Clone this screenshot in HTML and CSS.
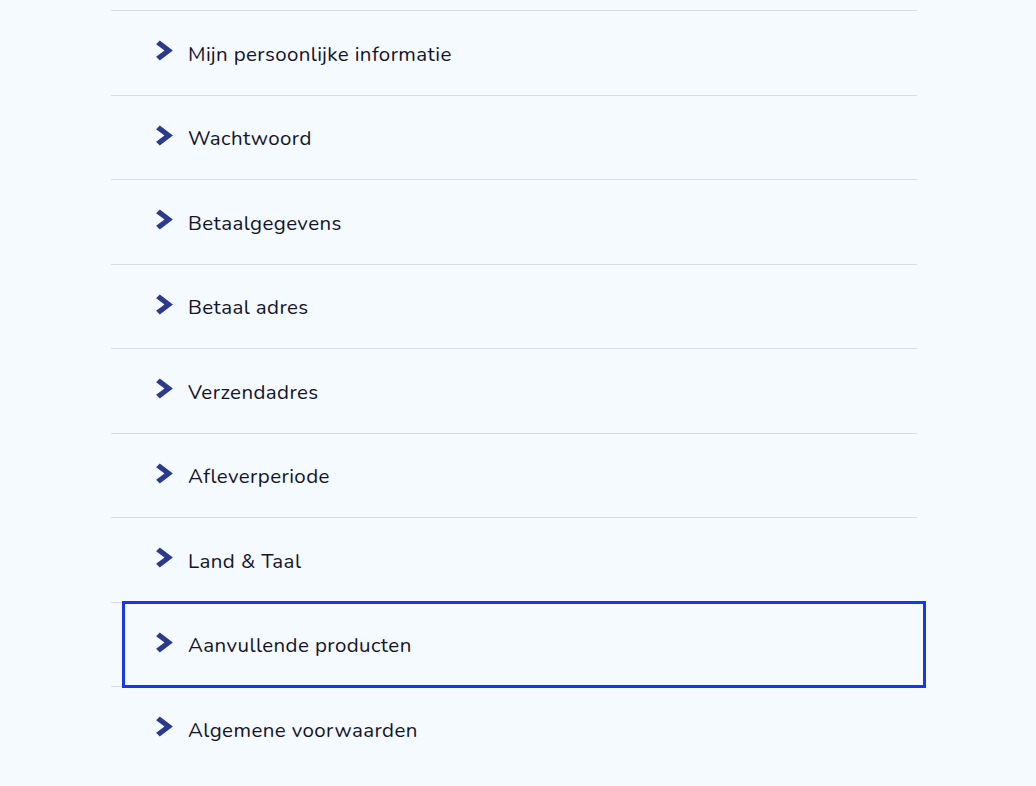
FILE: index.html
```html
<!DOCTYPE html>
<html lang="nl">
<head>
<meta charset="utf-8">
<title>Account</title>
<link rel="stylesheet" href="styles.css">
</head>
<body>
<ul class="menu">
  <li class="menu-item"><a class="menu-link" href="#"><svg class="chev" viewBox="0 0 16 20"><path d="M3.5 0.5 L16 10 L3.5 19.5 L0 16 L8 10 L0 4 Z"/></svg><span>Mijn persoonlijke informatie</span></a></li>
  <li class="menu-item"><a class="menu-link" href="#"><svg class="chev" viewBox="0 0 16 20"><path d="M3.5 0.5 L16 10 L3.5 19.5 L0 16 L8 10 L0 4 Z"/></svg><span>Wachtwoord</span></a></li>
  <li class="menu-item"><a class="menu-link" href="#"><svg class="chev" viewBox="0 0 16 20"><path d="M3.5 0.5 L16 10 L3.5 19.5 L0 16 L8 10 L0 4 Z"/></svg><span>Betaalgegevens</span></a></li>
  <li class="menu-item"><a class="menu-link" href="#"><svg class="chev" viewBox="0 0 16 20"><path d="M3.5 0.5 L16 10 L3.5 19.5 L0 16 L8 10 L0 4 Z"/></svg><span>Betaal adres</span></a></li>
  <li class="menu-item"><a class="menu-link" href="#"><svg class="chev" viewBox="0 0 16 20"><path d="M3.5 0.5 L16 10 L3.5 19.5 L0 16 L8 10 L0 4 Z"/></svg><span>Verzendadres</span></a></li>
  <li class="menu-item"><a class="menu-link" href="#"><svg class="chev" viewBox="0 0 16 20"><path d="M3.5 0.5 L16 10 L3.5 19.5 L0 16 L8 10 L0 4 Z"/></svg><span>Afleverperiode</span></a></li>
  <li class="menu-item"><a class="menu-link" href="#"><svg class="chev" viewBox="0 0 16 20"><path d="M3.5 0.5 L16 10 L3.5 19.5 L0 16 L8 10 L0 4 Z"/></svg><span>Land &amp; Taal</span></a></li>
  <li class="menu-item"><a class="menu-link is-focused" href="#"><svg class="chev" viewBox="0 0 16 20"><path d="M3.5 0.5 L16 10 L3.5 19.5 L0 16 L8 10 L0 4 Z"/></svg><span>Aanvullende producten</span></a></li>
  <li class="menu-item last"><a class="menu-link" href="#"><svg class="chev" viewBox="0 0 16 20"><path d="M3.5 0.5 L16 10 L3.5 19.5 L0 16 L8 10 L0 4 Z"/></svg><span>Algemene voorwaarden</span></a></li>
</ul>
</body>
</html>
```
FILE: styles.css
```css
html, body {
  margin: 0;
  padding: 0;
  background: #f5faff;
}
body {
  font-family: "Nunito", "Noto Sans", "Open Sans", sans-serif;
  color: #141428;
  padding-top: 10px;
}
.menu {
  list-style: none;
  margin: 0 0 0 111px;
  padding: 0;
  width: 806px;
  border-top: 1px solid #d7dde3;
}
.menu-item {
  height: 83.5px;
  border-bottom: 1px solid #d7dde3;
  display: flex;
}
.menu-item.last {
  border-bottom: none;
}
.menu-link {
  display: flex;
  align-items: center;
  gap: 15px;
  margin: 1px -6px 1px 14px;
  padding-left: 31px;
  flex: 1;
  color: inherit;
  text-decoration: none;
  font-size: 20.5px;
  font-weight: 400;
  letter-spacing: 0.4px;
  line-height: 1;
}
.menu-link span {
  padding-top: 2px;
}
.menu-link.is-focused {
  outline: 3px solid #1a36e8;
}
.chev {
  width: 17px;
  height: 21px;
  fill: #2c3a8c;
  flex: none;
  margin-bottom: 4px;
}
```
